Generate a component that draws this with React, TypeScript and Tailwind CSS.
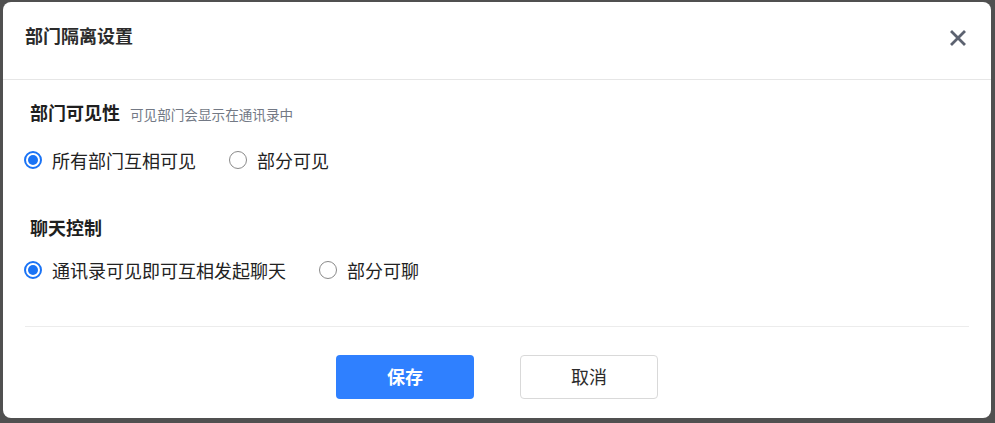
import { useState } from 'react';

function Radio({ checked, label, onClick }: { checked: boolean; label: string; onClick: () => void }) {
  return (
    <label onClick={onClick} className="flex items-center gap-[10px] cursor-pointer">
      {checked ? (
        <span className="w-[18px] h-[18px] rounded-full border-2 border-[#1a73f5] flex items-center justify-center">
          <span className="w-[10px] h-[10px] rounded-full bg-[#1a73f5]" />
        </span>
      ) : (
        <span className="w-[18px] h-[18px] rounded-full border border-[#8a8a8a] bg-white" />
      )}
      <span className="text-[18px] leading-[26px] text-[#222]">{label}</span>
    </label>
  );
}

export default function App() {
  const [visible, setVisible] = useState('all');
  const [chat, setChat] = useState('all');

  return (
    <div
      className="w-[995px] h-[423px] bg-[#505050] pl-[3px] pt-[2px]"
      style={{ fontFamily: '"Noto Sans CJK SC", "Noto Sans", sans-serif' }}
    >
      <div className="w-[988px] h-[416px] bg-white rounded-[8px] flex flex-col">
        {/* Header */}
        <div className="h-[78px] border-b border-[#e6e6e6] flex items-start justify-between pl-[22px] pr-[24px]">
          <h2 className="mt-[20px] text-[18px] leading-[26px] font-bold text-[#2b2b2b]">部门隔离设置</h2>
          <button className="mt-[27px] text-[#5c6270]" title="关闭">
            <svg className="w-[18px] h-[18px]" fill="none" stroke="currentColor" viewBox="0 0 18 18">
              <path strokeLinecap="square" strokeWidth="2.8" d="M3 3l12 12M15 3L3 15" />
            </svg>
          </button>
        </div>

        {/* Body */}
        <div className="flex-1 flex flex-col px-[22px]">
          <div className="mt-[19px] pl-[5px] flex items-baseline gap-[10px]">
            <span className="text-[18px] leading-[26px] font-bold text-[#1f1f1f]">部门可见性</span>
            <span className="text-[13.6px] text-[#737985]">可见部门会显示在通讯录中</span>
          </div>
          <div className="mt-[22px] flex items-center gap-[33px] -ml-[1px]">
            <Radio checked={visible === 'all'} label="所有部门互相可见" onClick={() => setVisible('all')} />
            <Radio checked={visible === 'part'} label="部分可见" onClick={() => setVisible('part')} />
          </div>

          <div className="mt-[41px] pl-[5px] text-[18px] leading-[26px] font-bold text-[#1f1f1f]">聊天控制</div>
          <div className="mt-[17px] flex items-center gap-[33px] -ml-[1px]">
            <Radio checked={chat === 'all'} label="通讯录可见即可互相发起聊天" onClick={() => setChat('all')} />
            <Radio checked={chat === 'part'} label="部分可聊" onClick={() => setChat('part')} />
          </div>

          <div className="mt-[43px] border-t border-[#ececec]" />

          {/* Footer */}
          <div className="mt-[28px] flex justify-center gap-[46px]">
            <button className="w-[138px] h-[44px] rounded-[4px] bg-[#2f80ff] text-white text-[18px] leading-[26px] font-bold pb-[2px]">
              保存
            </button>
            <button className="w-[138px] h-[44px] rounded-[4px] border border-[#d9d9d9] bg-white text-[#2b2b2b] text-[18px] leading-[26px] pb-[2px]">
              取消
            </button>
          </div>
        </div>
      </div>
    </div>
  );
}
